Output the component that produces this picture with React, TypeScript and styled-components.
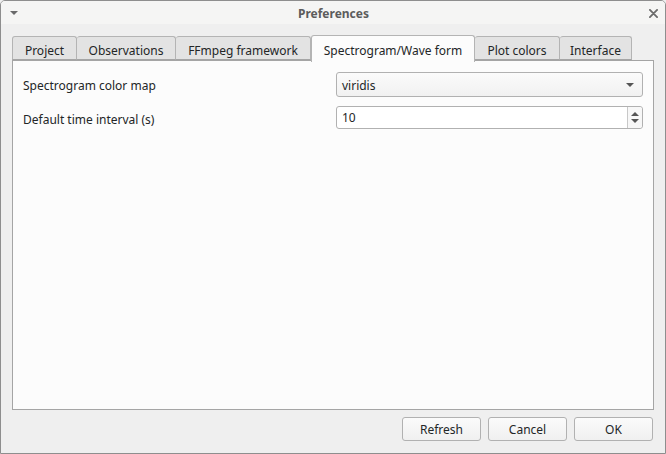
import React from 'react'
import styled, { createGlobalStyle } from 'styled-components'

const GlobalStyle = createGlobalStyle`
  html, body {
    margin: 0;
    padding: 0;
    background: #efefef;
  }
  body {
    font-family: "Noto Sans", "Open Sans", sans-serif;
    font-size: 12px;
    color: #232627;
  }
  * { box-sizing: border-box; }
`

const tabs = [
  { label: 'Project', width: 65 },
  { label: 'Observations', width: 99 },
  { label: 'FFmpeg framework', width: 135 },
  { label: 'Spectrogram/Wave form', width: 164 },
  { label: 'Plot colors', width: 85 },
  { label: 'Interface', width: 72 },
]
const activeTab = 3

const Window = styled.div`
  width: 666px;
  height: 454px;
  display: flex;
  flex-direction: column;
  border: 1px solid #8e8e8e;
  border-radius: 5px 5px 0 0;
  background: #efefef;
  overflow: hidden;
`

const TitleBar = styled.div`
  height: 23px;
  flex: none;
  display: flex;
  align-items: center;
  justify-content: space-between;
  padding: 1px 7px 0 9px;
  background: #f5f5f4;
`

const Title = styled.div`
  font-weight: 700;
  color: #5c5c5c;
  font-size: 12px;
`

const Body = styled.div`
  flex: 1;
  display: flex;
  flex-direction: column;
  padding: 11px;
  min-height: 0;
`

const TabBar = styled.div`
  display: flex;
  align-items: flex-end;
  height: 26px;
  flex: none;
  position: relative;
  z-index: 1;
  margin-bottom: -1px;
`

const Tab = styled.div<{ $active?: boolean; $width: number }>`
  width: ${p => p.$width}px;
  height: ${p => (p.$active ? '27px' : '24px')};
  margin-bottom: ${p => (p.$active ? '-1px' : '1px')};
  padding-top: ${p => (p.$active ? '2px' : '4px')};
  display: flex;
  align-items: center;
  justify-content: center;
  border: 1px solid #b4b4b4;
  border-bottom: ${p => (p.$active ? 'none' : '1px solid #a5a5a5')};
  border-left: ${p => (p.$active ? '1px solid #b4b4b4' : 'none')};
  border-radius: 3px 3px 0 0;
  background: ${p => (p.$active ? '#fcfcfc' : '#e3e3e3')};
  white-space: nowrap;
  &:first-child { border-left: 1px solid #b4b4b4; }
`

const Pane = styled.div`
  flex: 1;
  border: 1px solid #a5a5a5;
  background: #fcfcfc;
  padding: 11px 10px;
  display: grid;
  grid-template-columns: 1fr 1fr;
  column-gap: 6px;
  row-gap: 9px;
  align-content: start;
`

const Label = styled.div`
  display: flex;
  align-items: center;
  height: 24px;
  padding-top: 2px;
`

const Field = styled.div<{ $height: number }>`
  height: ${p => p.$height}px;
  border: 1px solid #b1b1b1;
  border-radius: 3px;
  display: flex;
  align-items: center;
  padding-left: 5px;
  position: relative;
`

const FieldText = styled.span<{ $shift: number }>`
  padding-top: ${p => p.$shift}px;
`

const Combo = styled(Field)`
  background: linear-gradient(#fbfbfb, #f1f1f1);
  justify-content: space-between;
  padding-right: 8px;
`

const Spin = styled(Field)`
  background: #ffffff;
  justify-content: space-between;
  padding-right: 0;
`

const SpinButtons = styled.div`
  width: 15px;
  height: 100%;
  border-left: 1px solid #c8c8c8;
  display: flex;
  flex-direction: column;
  align-items: center;
  justify-content: center;
  gap: 3px;
  background: #f7f7f7;
  border-radius: 0 3px 3px 0;
`

const Footer = styled.div`
  flex: none;
  display: flex;
  justify-content: flex-end;
  gap: 7px;
  margin-top: 7px;
  margin-bottom: 1px;
  padding-right: 1px;
`

const Button = styled.div`
  width: 79px;
  height: 24px;
  border: 1px solid #b1b1b1;
  border-radius: 3px;
  background: linear-gradient(#fbfbfb, #f0f0f0);
  display: flex;
  align-items: center;
  justify-content: center;
`

const Triangle = ({ up, size = 4, color = '#5f5f5f' }: { up?: boolean; size?: number; color?: string }) => (
  <svg width={size * 2} height={size} viewBox={`0 0 ${size * 2} ${size}`}>
    <polygon
      points={up ? `0,${size} ${size * 2},${size} ${size},0` : `0,0 ${size * 2},0 ${size},${size}`}
      fill={color}
    />
  </svg>
)

export default function App() {
  return (
    <>
      <GlobalStyle />
      <Window>
        <TitleBar>
          <Triangle size={4} color="#6a6a6a" />
          <Title>Preferences</Title>
          <svg width="9" height="9" viewBox="0 0 10 10">
            <path d="M1 1 L9 9 M9 1 L1 9" stroke="#6b6b6b" strokeWidth="2" strokeLinecap="round" />
          </svg>
        </TitleBar>
        <Body>
          <TabBar>
            {tabs.map((t, i) => (
              <Tab key={t.label} $width={t.width} $active={i === activeTab}>{t.label}</Tab>
            ))}
          </TabBar>
          <Pane>
            <Label>Spectrogram color map</Label>
            <Combo $height={25}>
              <FieldText $shift={2}>viridis</FieldText>
              <Triangle size={4} color="#555" />
            </Combo>
            <Label>Default time interval (s)</Label>
            <Spin $height={23}>
              <FieldText $shift={0}>10</FieldText>
              <SpinButtons>
                <Triangle up size={4} color="#555" />
                <Triangle size={4} color="#555" />
              </SpinButtons>
            </Spin>
          </Pane>
          <Footer>
            <Button>Refresh</Button>
            <Button>Cancel</Button>
            <Button>OK</Button>
          </Footer>
        </Body>
      </Window>
    </>
  )
}
